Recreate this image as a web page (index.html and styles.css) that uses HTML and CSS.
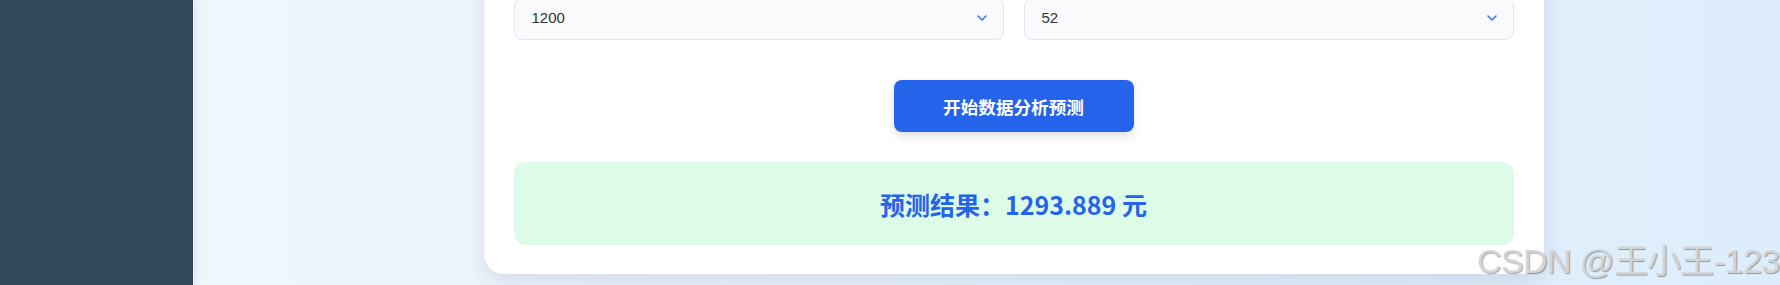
FILE: index.html
```html
<!DOCTYPE html>
<html lang="zh-CN">
<head>
<meta charset="utf-8">
<title>数据分析预测</title>
<link rel="stylesheet" href="styles.css">
</head>
<body>
<div class="layout">
  <aside class="sidebar"></aside>
  <main class="main">
    <section class="card">
      <div class="form-row">
        <div class="select">
          <span class="select-value">1200</span>
          <svg class="chevron" width="10" height="6" viewBox="0 0 10 6"><path d="M1 1 L5 5 L9 1" fill="none" stroke="#3b6ff0" stroke-width="1.5" stroke-linecap="round" stroke-linejoin="round"/></svg>
        </div>
        <div class="select">
          <span class="select-value">52</span>
          <svg class="chevron" width="10" height="6" viewBox="0 0 10 6"><path d="M1 1 L5 5 L9 1" fill="none" stroke="#3b6ff0" stroke-width="1.5" stroke-linecap="round" stroke-linejoin="round"/></svg>
        </div>
      </div>
      <div class="actions">
        <button class="btn-primary" type="button">开始数据分析预测</button>
      </div>
      <div class="result">预测结果：1293.889 元</div>
    </section>
  </main>
</div>
<div class="watermark">CSDN @王小王-123</div>
</body>
</html>
```

FILE: styles.css
```css
html, body {
  margin: 0;
  padding: 0;
  height: 100%;
  overflow: hidden;
}

body {
  font-family: "Noto Sans CJK SC", "Noto Sans", sans-serif;
}

.layout {
  display: flex;
  height: 100vh;
}

.sidebar {
  width: 193px;
  flex: 0 0 193px;
  background: #33475b;
  box-shadow: 2px 0 10px rgba(0, 0, 0, 0.08);
  position: relative;
  z-index: 1;
}

.main {
  flex: 1;
  background: linear-gradient(to right, #f0f6fe 0%, #e6f1fd 60%, #ddedfb 100%);
  padding-left: 54px;
  display: flex;
  flex-direction: column;
  align-items: center;
}

.card {
  width: 1060px;
  box-sizing: border-box;
  margin-top: -32px;
  padding: 30px 30px 29px;
  background: #ffffff;
  border-radius: 20px;
  box-shadow: 0 8px 22px rgba(30, 50, 80, 0.12);
}

.form-row {
  display: grid;
  grid-template-columns: 1fr 1fr;
  gap: 20px;
}

.select {
  height: 42px;
  box-sizing: border-box;
  border: 1px solid #e2e8f0;
  border-radius: 8px;
  background: #f8fafc;
  display: flex;
  align-items: center;
  justify-content: space-between;
  padding: 0 16px 0 17px;
}

.select-value {
  font-family: "Liberation Sans", Arial, sans-serif;
  font-size: 15px;
  color: #333333;
  margin-top: -3px;
}

.chevron {
  display: block;
  margin-top: -2px;
}

.actions {
  display: flex;
  justify-content: center;
  margin-top: 40px;
}

.btn-primary {
  width: 240px;
  height: 52px;
  border: none;
  border-radius: 8px;
  background: #2563eb;
  color: #ffffff;
  font-family: "Noto Sans CJK SC", sans-serif;
  font-size: 17.6px;
  font-weight: 700;
  box-shadow: 0 4px 8px rgba(0, 0, 0, 0.13);
  padding: 0;
}

.result {
  margin-top: 30px;
  height: 83px;
  box-sizing: border-box;
  background: #dcfce7;
  border-radius: 12px;
  display: flex;
  align-items: center;
  justify-content: center;
  color: #2563eb;
  font-size: 25px;
  font-weight: 700;
}

.watermark {
  position: absolute;
  left: 1477px;
  top: 234px;
  font-family: "Liberation Sans", Arial, sans-serif;
  font-size: 34px;
  letter-spacing: -0.6px;
  color: rgba(215, 215, 215, 0.95);
  text-shadow: 1px 1px 1px rgba(0, 0, 0, 0.35);
  white-space: nowrap;
}
```
